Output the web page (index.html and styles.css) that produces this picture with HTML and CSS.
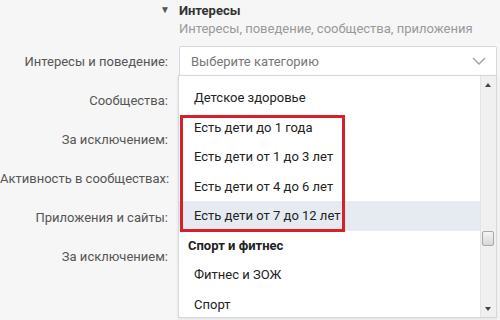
FILE: index.html
```html
<!DOCTYPE html>
<html lang="ru">
<head>
  <meta charset="UTF-8" />
  <title>Интересы</title>
  <link rel="stylesheet" href="styles.css">
</head>
<body>
<div class="panel">
  <div class="head">
    <span class="arrow">&#9660;</span>
    <div>
      <div class="title">Интересы</div>
      <div class="sub">Интересы, поведение, сообщества, приложения</div>
    </div>
  </div>

  <div class="form">
    <div class="row">
      <label>Интересы и поведение:</label>
      <div class="select">
        <span>Выберите категорию</span>
        <svg class="chev" width="14" height="8" viewBox="0 0 14 8"><path d="M1 1l6 6 6-6" fill="none" stroke="#9aa0a6" stroke-width="1.3"/></svg>
      </div>
    </div>
    <div class="row"><label>Сообщества:</label><div class="field"></div></div>
    <div class="row"><label>За исключением:</label><div class="field"></div></div>
    <div class="row"><label>Активность в сообществах:</label><div class="field"></div></div>
    <div class="row"><label>Приложения и сайты:</label><div class="field"></div></div>
    <div class="row"><label>За исключением:</label><div class="field"></div></div>

    <div class="menu">
      <ul class="items">
        <li>Детское здоровье</li>
        <li>Есть дети до 1 года</li>
        <li>Есть дети от 1 до 3 лет</li>
        <li>Есть дети от 4 до 6 лет</li>
        <li class="active">Есть дети от 7 до 12 лет</li>
        <li class="group">Спорт и фитнес</li>
        <li>Фитнес и ЗОЖ</li>
        <li>Спорт</li>
      </ul>
      <div class="scroll">
        <span class="up"></span>
        <span class="thumb"></span>
        <span class="down"></span>
      </div>
      <div class="mark"></div>
    </div>
  </div>
</div>
</body>
</html>
```

FILE: styles.css
```css
body {
  margin: 0;
  background: #f6f6f6;
  font-family: Roboto, 'Noto Sans', sans-serif;
  font-size: 13px;
  color: #222;
}
.panel {
  width: 500px;
  height: 320px;
  overflow: hidden;
}
.head {
  display: flex;
  padding: 3px 0 0 160px;
  gap: 9px;
}
.arrow {
  font-size: 10px;
  color: #555;
  line-height: 14px;
}
.title {
  font-weight: bold;
  color: #333;
  line-height: 16px;
}
.sub {
  color: #999;
  margin-top: 2px;
  line-height: 16px;
}
.form {
  position: relative;
  margin-top: 9px;
  display: flex;
  flex-direction: column;
  gap: 9px;
}
.row {
  display: flex;
  align-items: center;
  height: 30px;
}
.row label {
  flex: 0 0 168px;
  margin-right: 11px;
  text-align: right;
  white-space: nowrap;
  color: #555;
}
.select, .field {
  width: 318px;
  height: 30px;
  box-sizing: border-box;
}
.select {
  background: #fff;
  border: 1px solid #d3d9de;
  border-radius: 2px;
  display: flex;
  align-items: center;
  justify-content: space-between;
  padding: 0 10px 0 11px;
  color: #777;
}
.menu {
  position: absolute;
  left: 178px;
  top: 29px;
  width: 319px;
  height: 243px;
  background: #fff;
  border: 1px solid #d3d9de;
  box-shadow: 0 1px 3px rgba(0,0,0,0.1);
  box-sizing: border-box;
  display: flex;
}
.items {
  list-style: none;
  margin: 0;
  padding: 7px 0 0;
  flex: 1;
}
.items li {
  height: 29.5px;
  line-height: 29.5px;
  padding-left: 15px;
  color: #222;
}
.items li.active {
  background: #e5ebf1;
}
.items li.group {
  font-weight: bold;
  padding-left: 9px;
}
.scroll {
  width: 15px;
  background: #f0f0f0;
  border-left: 1px solid #e4e4e4;
  position: relative;
}
.up, .down {
  position: absolute;
  left: 4px;
  width: 0;
  height: 0;
  border-left: 3px solid transparent;
  border-right: 3px solid transparent;
}
.up {
  top: 7px;
  border-bottom: 4px solid #444;
}
.down {
  bottom: 6px;
  border-top: 4px solid #444;
}
.thumb {
  position: absolute;
  left: 1px;
  top: 155px;
  width: 12px;
  height: 15px;
  border: 1px solid #a8a8a8;
  border-radius: 2px;
  background: linear-gradient(#f4f4f4, #d8d8d8);
  box-sizing: border-box;
}
.mark {
  position: absolute;
  left: 1px;
  top: 39px;
  width: 165px;
  height: 117px;
  border: 3px solid #d8202a;
  box-sizing: border-box;
}
```
